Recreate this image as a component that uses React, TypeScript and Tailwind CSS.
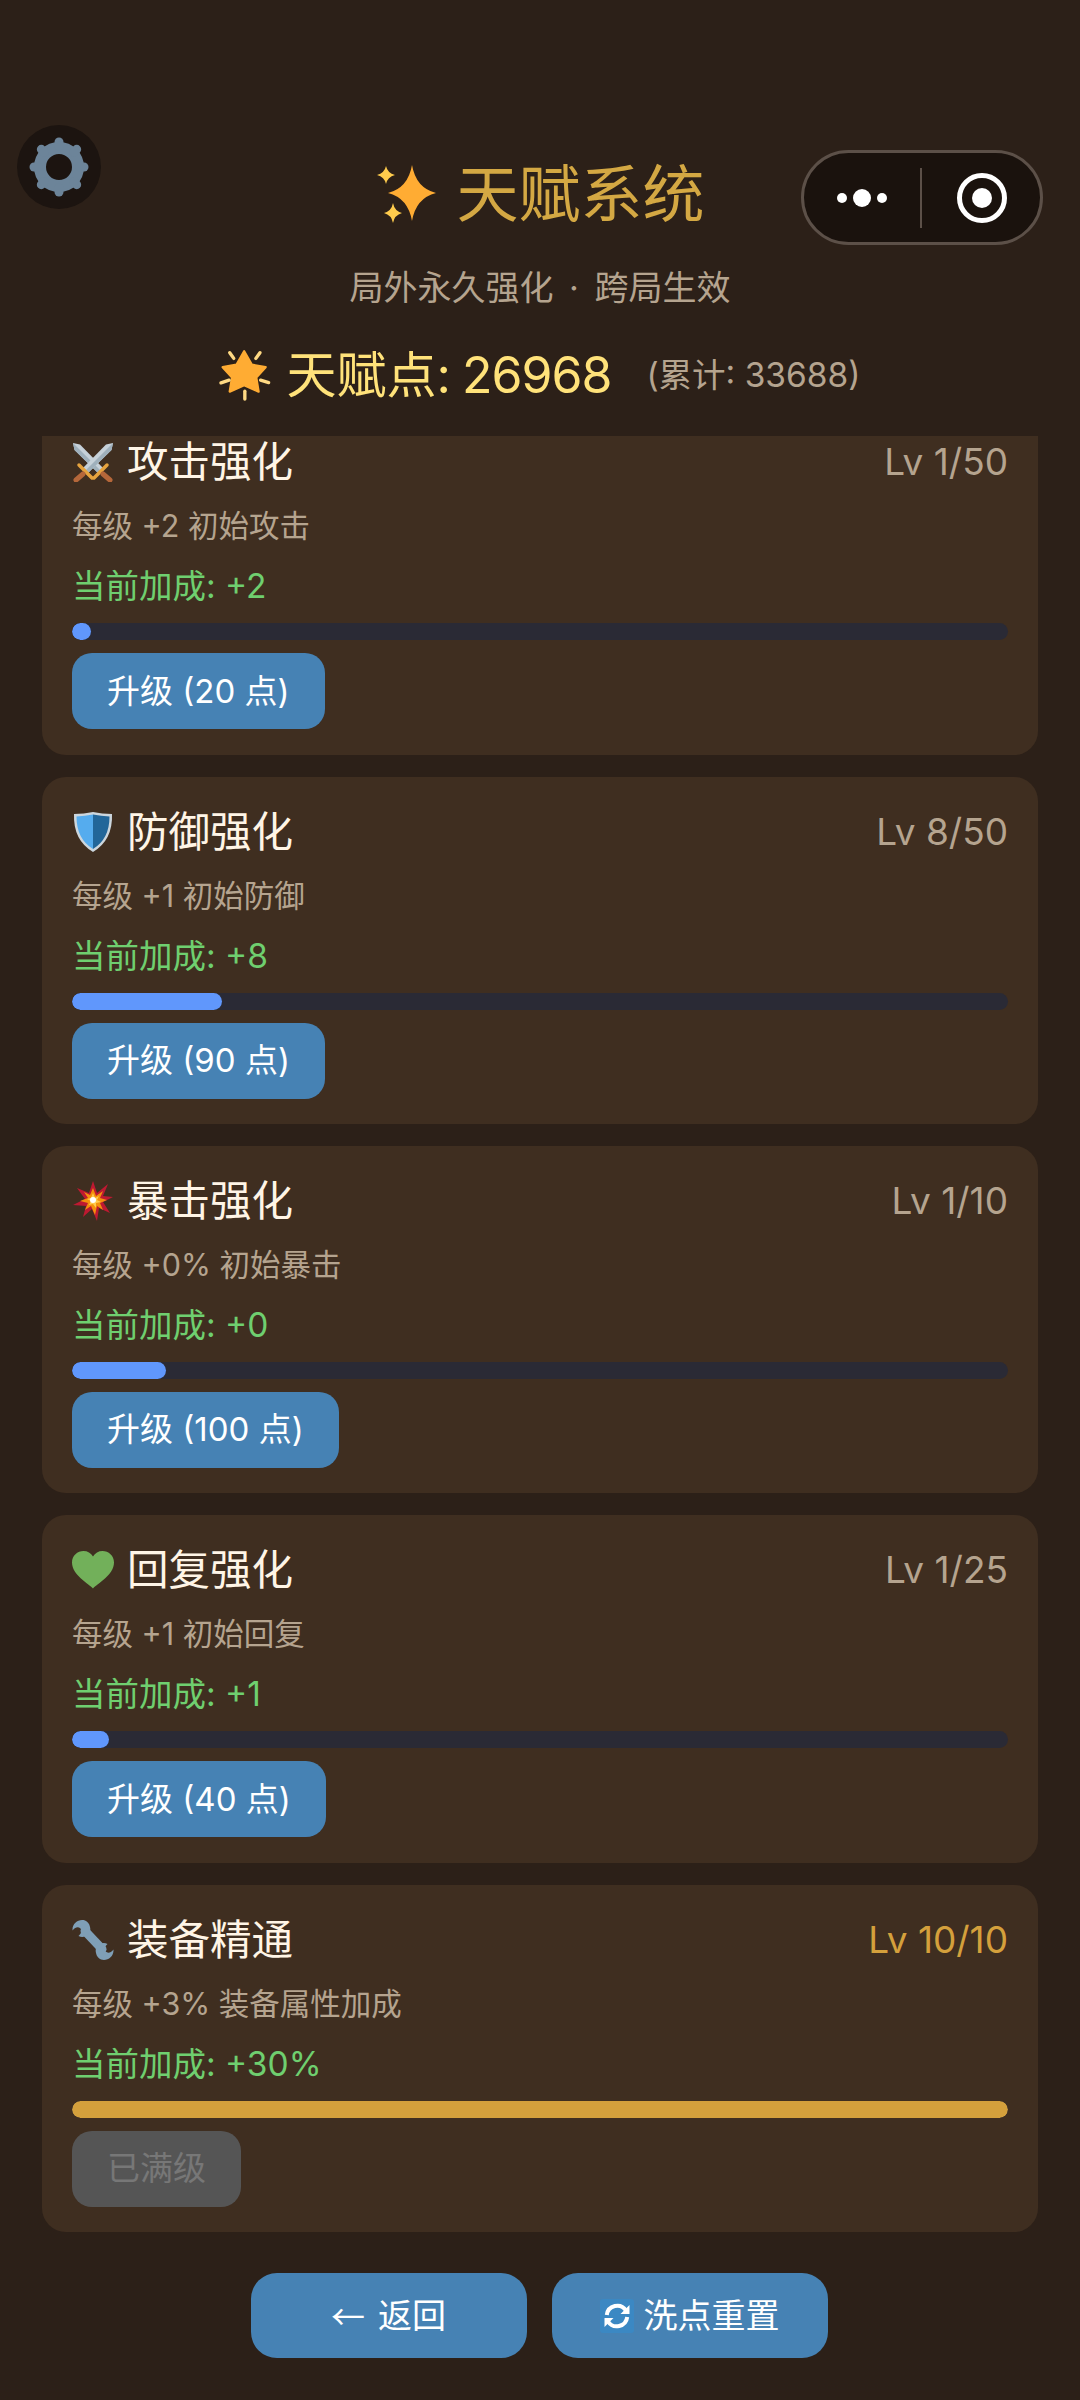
import React from "react";

const FONT = "font-['Inter','Noto_Sans_CJK_SC',sans-serif]";

function Sparkles() {
  return (
    <svg width="62" height="60" viewBox="0 0 62 60" className="shrink-0">
      <path d="M37 0Q41 23 61 28Q41 33 37 56Q33 33 13 28Q33 23 37 0Z" fill="#ffac33" />
      <path d="M11 1Q12.500 8 20 10Q12.500 12 11 19Q9.500 12 2 10Q9.500 8 11 1Z" fill="#ffcc4d" />
      <path d="M18 38Q19.500 46 27 48Q19.500 50 18 58Q16.500 50 9 48Q16.500 46 18 38Z" fill="#ffcc4d" />
    </svg>
  );
}

function GlowStar() {
  return (
    <svg width="52" height="52" viewBox="60 55 155 155" className="shrink-0">
      <path
        d="M135 62L158 102L199 109L171 140L178 182L135 163L92 182L99 140L71 109L112 102Z"
        fill="#ffac33"
        stroke="#ffac33"
        strokeWidth="7"
        strokeLinejoin="round"
      />
      <g stroke="#ffd983" strokeWidth="10" strokeLinecap="round">
        <line x1="92" y1="66" x2="104" y2="83" />
        <line x1="182" y1="66" x2="170" y2="83" />
        <line x1="66" y1="156" x2="90" y2="148" />
        <line x1="208" y1="155" x2="184" y2="148" />
        <line x1="137" y1="181" x2="137" y2="204" />
      </g>
    </svg>
  );
}

function Gear() {
  const angles = [0, 45, 90, 135, 180, 225, 270, 315];
  return (
    <svg width="60" height="60" viewBox="-30 -30 60 60">
      <circle r="19" fill="none" stroke="#6c8499" strokeWidth="12" />
      {angles.map((a) => (
        <line
          key={a}
          x1="0"
          y1="-21"
          x2="0"
          y2="-25"
          stroke="#6c8499"
          strokeWidth="9"
          strokeLinecap="round"
          transform={`rotate(${a})`}
        />
      ))}
    </svg>
  );
}

function Swords() {
  const one = (
    <>
      <path d="M41 1L39.500 8L15 32L10 27L34 2.500Z" fill="#c6d1d9" />
      <path d="M39.500 8L15 32L12.500 29.500L41 1Z" fill="#9fb0bc" />
      <path d="M7 23L20 36" stroke="#e6a33e" strokeWidth="3.500" strokeLinecap="round" />
      <path d="M11 32L4 38" stroke="#b5673a" strokeWidth="5" strokeLinecap="round" />
    </>
  );
  return (
    <svg width="42" height="40" viewBox="0 0 42 40" className="shrink-0">
      <g transform="matrix(-1 0 0 1 42 0)">{one}</g>
      {one}
    </svg>
  );
}

function Shield() {
  return (
    <svg width="42" height="42" viewBox="0 0 42 42" className="shrink-0">
      <path d="M21 1Q30 3 40 3Q41 29 21 41Q1 29 2 3Q12 3 21 1Z" fill="#ccd6dd" />
      <path d="M21 3.500Q13 5 4.500 5.500Q4.500 28 21 38Z" fill="#55acee" />
      <path d="M21 3.500Q29 5 37.500 5.500Q37.500 28 21 38Z" fill="#226699" />
    </svg>
  );
}

function Collision() {
  return (
    <svg width="42" height="42" viewBox="0 0 42 42" className="shrink-0">
      <path
        d="M21 1L25 13L36 4L31 16L41 17L31 22L38 33L27 28L25 41L20 29L11 37L14 26L1 25L13 19L5 8L17 13Z"
        fill="#be1931"
      />
      <path d="M21 8L24 16L31 11L28 18L35 20L28 23L31 30L25 26L23 35L19 26L13 30L16 23L8 21L16 18L12 12L18 15Z" fill="#f4900c" />
      <path d="M21 13L23 18L27 16L25 20L29 22L24 23L24 28L21 24L17 25L19 21L15 19L19 18Z" fill="#ffcc4d" />
      <circle cx="21" cy="20" r="3" fill="#fff" />
    </svg>
  );
}

function Heart() {
  return (
    <svg width="42" height="38" viewBox="0 0 42 38" className="shrink-0">
      <path
        d="M21 37.500C17 33 0 24 0 11.500C0 4.500 5.500 0 11.500 0C15.500 0 19 2 21 5.500C23 2 26.500 0 30.500 0C36.500 0 42 4.500 42 11.500C42 24 25 33 21 37.500Z"
        fill="#72b05a"
      />
    </svg>
  );
}

function Wrench() {
  return (
    <svg width="42" height="42" viewBox="0 0 42 42" className="shrink-0">
      <path d="M13 12L30 30" stroke="#7f9fb6" strokeWidth="9" strokeLinecap="round" />
      <path d="M13 1.500C7 -0.500 0 4 0.500 11.500C3.500 8 6 7.500 8.500 9.500C10.500 12 9 14.500 6.500 17C12.500 20 20 15 18 8C17.500 5 15.500 2.500 13 1.500Z" fill="#7f9fb6" />
      <path d="M29 40.500C35 42.500 42 38 41.500 30.500C38.500 34 36 34.500 33.500 32.500C31.500 30 33 27.500 35.500 25C29.500 22 22 27 24 34C24.500 37 26.500 39.500 29 40.500Z" fill="#7f9fb6" />
    </svg>
  );
}

function RefreshBox() {
  return (
    <svg width="34" height="34" viewBox="0 0 34 34" className="shrink-0">
      <rect width="34" height="34" rx="3" fill="#3b88c3" />
      <path d="M26 11.500A10.500 10.500 0 0 0 6.800 16" fill="none" stroke="#fff" strokeWidth="4" />
      <path d="M8 22.500A10.500 10.500 0 0 0 27.200 18" fill="none" stroke="#fff" strokeWidth="4" />
      <path d="M29.500 6V15H20.500Z" fill="#fff" />
      <path d="M4.500 28V19H13.500Z" fill="#fff" />
    </svg>
  );
}

type Talent = {
  icon: React.ReactNode;
  name: string;
  level: string;
  desc: string;
  bonus: string;
  progress: number;
  cost?: string;
};

const talents: Talent[] = [
  { icon: <Swords />, name: "攻击强化", level: "Lv 1/50", desc: "每级 +2 初始攻击", bonus: "当前加成: +2", progress: 2, cost: "升级 (20 点)" },
  { icon: <Shield />, name: "防御强化", level: "Lv 8/50", desc: "每级 +1 初始防御", bonus: "当前加成: +8", progress: 16, cost: "升级 (90 点)" },
  { icon: <Collision />, name: "暴击强化", level: "Lv 1/10", desc: "每级 +0% 初始暴击", bonus: "当前加成: +0", progress: 10, cost: "升级 (100 点)" },
  { icon: <Heart />, name: "回复强化", level: "Lv 1/25", desc: "每级 +1 初始回复", bonus: "当前加成: +1", progress: 4, cost: "升级 (40 点)" },
  { icon: <Wrench />, name: "装备精通", level: "Lv 10/10", desc: "每级 +3% 装备属性加成", bonus: "当前加成: +30%", progress: 100 },
];

function Card({ t }: { t: Talent }) {
  const maxed = !t.cost;
  return (
    <div className="shrink-0 rounded-[24px] bg-[#3f2e20] px-[30px] pt-[30px] pb-[25.300px]">
      <div className="flex h-[50px] items-center justify-between">
        <div className="flex items-center gap-[13px]">
          <div className="flex w-[42px] shrink-0 justify-center">{t.icon}</div>
          <span className="text-[41.500px] leading-[50px] text-[#fff5e6]">{t.name}</span>
        </div>
        <span className={`text-[37px] leading-[50px] ${maxed ? "text-[#d4a03c]" : "text-[#b5a48f]"}`}>{t.level}</span>
      </div>
      <div className="mt-[19px] h-[40px] text-[30.500px] leading-[40px] text-[#b5a48f]">{t.desc}</div>
      <div className="mt-[18px] h-[44px] text-[33.500px] leading-[44px] text-[#6fcf6f]">{t.bonus}</div>
      <div className="mt-[15px] h-[17px] overflow-hidden rounded-full bg-[#2a2a35]">
        <div
          className={`h-full rounded-full ${maxed ? "bg-[#d4a03c]" : "bg-[#6097fc]"}`}
          style={{ width: `${t.progress}%` }}
        />
      </div>
      <button
        className={`mt-[13px] flex h-[76px] items-center rounded-[20px] px-[35px] text-[33px] ${
          maxed ? "bg-[#555555] text-[#777777]" : "bg-[#4682b4] text-white"
        }`}
      >
        {t.cost ?? "已满级"}
      </button>
    </div>
  );
}

export default function App() {
  return (
    <div className={`relative flex h-[2400px] w-[1080px] flex-col overflow-hidden bg-[#2c2018] ${FONT}`}>
      <div className="absolute left-[17px] top-[125px] flex size-[84px] items-center justify-center rounded-full bg-[#1c1410]">
        <Gear />
      </div>

      <div className="absolute left-[801px] top-[150px] flex h-[95px] w-[242px] items-center rounded-full border-[3px] border-[#5c5048] bg-[#1a120d]">
        <div className="flex flex-1 items-center justify-center gap-[6px]">
          <span className="size-[10px] rounded-full bg-white" />
          <span className="size-[18px] rounded-full bg-white" />
          <span className="size-[10px] rounded-full bg-white" />
        </div>
        <span className="h-[60px] w-[2px] bg-[#5c5048]" />
        <div className="flex flex-1 items-center justify-center pl-[2px]">
          <span className="flex size-[50px] items-center justify-center rounded-full border-[5px] border-white">
            <span className="size-[20px] rounded-full bg-white" />
          </span>
        </div>
      </div>

      <header className="flex h-[436px] shrink-0 flex-col items-center pt-[160px]">
        <div className="flex h-[70px] items-center gap-[19px]">
          <Sparkles />
          <span className="text-[62px] leading-[70px] text-[#d4a843]">天赋系统</span>
        </div>
        <div className="mt-[36px] h-[44px] text-[34px] leading-[44px] text-[#b5a48f] [word-spacing:6px]">
          局外永久强化 · 跨局生效
        </div>
        <div className="mt-[35px] flex h-[60px] items-center">
          <GlowStar />
          <span className="ml-[15px] text-[50px] leading-[60px] text-[#ffe27a] [word-spacing:-3px]">
            天赋点: <span className="tracking-[-1px]">26968</span>
          </span>
          <span className="ml-[35px] text-[33.500px] leading-[60px] text-[#b5a48f]">(累计: 33688)</span>
        </div>
      </header>

      <main className="min-h-0 flex-1 overflow-hidden px-[42px]">
        <div className="-mt-[28.600px] flex flex-col gap-[22px]">
          {talents.map((t) => (
            <Card key={t.name} t={t} />
          ))}
        </div>
      </main>

      <footer className="flex shrink-0 justify-center gap-[25px] pt-[20px] pr-[2px] pb-[42px]">
        <button className="flex h-[85px] w-[276px] items-center justify-center gap-[13px] rounded-[26px] bg-[#4682b4] text-[34px] text-white">
          <span className="font-['Noto_Sans_CJK_SC',sans-serif]">←</span>
          <span>返回</span>
        </button>
        <button className="flex h-[85px] w-[276px] items-center justify-center gap-[10px] rounded-[26px] bg-[#4682b4] text-[34px] text-white">
          <RefreshBox />
          <span>洗点重置</span>
        </button>
      </footer>
    </div>
  );
}
